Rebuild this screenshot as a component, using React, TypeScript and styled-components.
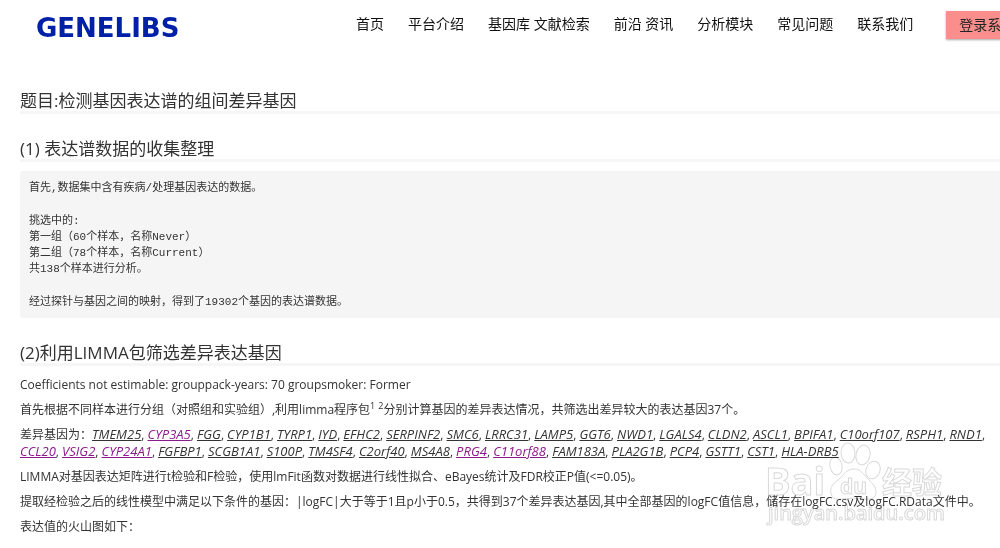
import React from "react";
import styled, { createGlobalStyle } from "styled-components";

const GlobalStyle = createGlobalStyle`
  body {
    margin: 0;
    background: #fff;
    color: #333;
    font: 12px/17px "Open Sans", "Noto Sans CJK SC", sans-serif;
  }
`;

const Page = styled.div`
  position: relative;
  overflow: hidden;
`;

const Header = styled.header`
  display: flex;
  align-items: flex-start;
  padding: 11px 0 0 36px;
  white-space: nowrap;
`;

const Logo = styled.a`
  flex: none;
  width: 320px;
  padding-top: 2px;
  color: #0020a8;
  font: bold 26px/30px "DejaVu Sans", sans-serif;
  text-decoration: none;
`;

const Nav = styled.nav`
  display: flex;
  flex: none;
  gap: 24px;
  padding-right: 33px;
`;

const NavLink = styled.a`
  color: #111;
  font-size: 14px;
  line-height: 26px;
  text-decoration: none;
`;

const LoginButton = styled.button`
  flex: none;
  height: 28px;
  padding: 0 13px;
  border: 0;
  background: #fa8e8c;
  box-shadow: 0 1px 2px rgba(0, 0, 0, 0.35);
  color: #222;
  font: 14px/28px "Open Sans", "Noto Sans CJK SC", sans-serif;
`;

const Article = styled.main`
  padding: 48px 0 12px 20px;
`;

const Heading = styled.h2`
  margin: 0 0 25px;
  border-bottom: 3px solid #f6f6f6;
  font-size: 17px;
  font-weight: 400;
  line-height: 20px;
`;

const SectionHeading = styled(Heading)`
  margin-bottom: 9px;
`;

const DataBlock = styled.div`
  display: flex;
  flex-direction: column;
  gap: 17px;
  margin-bottom: 25px;
  padding: 9px 9px 8px;
  border-radius: 3px 0 0 3px;
  background: #f5f5f5;
  font: 11px/16px "Liberation Mono", "Noto Sans CJK SC", monospace;
`;

const DataText = styled.p`
  margin: 0;
  white-space: pre-line;
`;

const Paragraph = styled.p`
  margin: 0 0 8px;
`;

const Results = styled.div`
  padding-top: 1px;
`;

const Sup = styled.sup`
  font-size: 9px;
  line-height: 0;
`;

const GeneLink = styled.a<{ $visited: boolean }>`
  color: ${(p) => (p.$visited ? "#8b1a8b" : "#333")};
  font-size: 13px;
  font-style: italic;
  text-decoration: underline;
`;

const Watermark = styled.div`
  position: absolute;
  top: 440px;
  left: 766px;
  width: 182px;
  opacity: 0.75;
  mix-blend-mode: multiply;
  pointer-events: none;
`;

const navItems = [
  "首页",
  "平台介绍",
  "基因库 文献检索",
  "前沿 资讯",
  "分析模块",
  "常见问题",
  "联系我们",
];

const genes =
  "TMEM25 CYP3A5 FGG CYP1B1 TYRP1 IYD EFHC2 SERPINF2 SMC6 LRRC31 LAMP5 GGT6 NWD1 LGALS4 CLDN2 ASCL1 BPIFA1 C10orf107 RSPH1 RND1 CCL20 VSIG2 CYP24A1 FGFBP1 SCGB1A1 S100P TM4SF4 C2orf40 MS4A8 PRG4 C11orf88 FAM183A PLA2G1B PCP4 GSTT1 CST1 HLA-DRB5".split(" ");

const visitedGenes = new Set(["CYP3A5", "CCL20", "VSIG2", "CYP24A1", "PRG4", "C11orf88"]);

const BaiduMark = () => (
  <Watermark>
    <svg width="182" height="90" viewBox="0 0 182 90" fill="#fff" stroke="#ccc" strokeWidth="1">
      <g fontFamily="Open Sans, Noto Sans CJK SC, sans-serif" fontWeight="700">
        <text x="-1" y="55" fontSize="38">Bai</text>
        <ellipse cx="70" cy="26" rx="6" ry="9" transform="rotate(-12 70 26)" />
        <ellipse cx="82" cy="13" rx="7" ry="10" transform="rotate(-4 82 13)" />
        <ellipse cx="97" cy="15" rx="7" ry="10" transform="rotate(12 97 15)" />
        <ellipse cx="107" cy="30" rx="7" ry="9" transform="rotate(20 107 30)" />
        <path d="M88 29c-8 0-10 6-16 11-6 4-8 8-7 13 1 6 6 7 11 6 8-1 15-1 23 0 6 1 11-1 11-7 0-5-3-8-7-12-6-6-8-11-15-11z" />
        <text x="74" y="54" fontSize="21">du</text>
        <text x="116" y="53" fontSize="30">经验</text>
        <text x="2" y="80" fontSize="20" fontWeight="600">jingyan.baidu.com</text>
      </g>
    </svg>
  </Watermark>
);

export default function App() {
  return (
    <>
      <GlobalStyle />
      <Page>
        <Header>
          <Logo href="#">GENELIBS</Logo>
          <Nav>
            {navItems.map((item) => (
              <NavLink href="#" key={item}>{item}</NavLink>
            ))}
          </Nav>
          <LoginButton type="button">登录系统</LoginButton>
        </Header>
        <Article>
          <Heading as="h1">题目:检测基因表达谱的组间差异基因</Heading>
          <SectionHeading>(1) 表达谱数据的收集整理</SectionHeading>
          <DataBlock>
            <DataText>首先,数据集中含有疾病/处理基因表达的数据。</DataText>
            <DataText>
              {"挑选中的:\n第一组（60个样本，名称Never）\n第二组（78个样本，名称Current）\n共138个样本进行分析。"}
            </DataText>
            <DataText>经过探针与基因之间的映射，得到了19302个基因的表达谱数据。</DataText>
          </DataBlock>
          <SectionHeading>(2)利用LIMMA包筛选差异表达基因</SectionHeading>
          <Results>
            <Paragraph>Coefficients not estimable: grouppack-years: 70 groupsmoker: Former</Paragraph>
            <Paragraph>
              首先根据不同样本进行分组（对照组和实验组）,利用limma程序包<Sup>1</Sup> <Sup>2</Sup>
              分别计算基因的差异表达情况，共筛选出差异较大的表达基因37个。
            </Paragraph>
            <Paragraph>
              差异基因为：
              {genes.map((gene, i) => (
                <React.Fragment key={gene}>
                  <GeneLink href="#" $visited={visitedGenes.has(gene)}>{gene}</GeneLink>
                  {i < genes.length - 1 ? ", " : ""}
                </React.Fragment>
              ))}
            </Paragraph>
            <Paragraph>
              LIMMA对基因表达矩阵进行t检验和F检验，使用lmFit函数对数据进行线性拟合、eBayes统计及FDR校正P值(&lt;=0.05)。
            </Paragraph>
            <Paragraph>
              提取经检验之后的线性模型中满足以下条件的基因：|logFC|大于等于1且p小于0.5，共得到37个差异表达基因,其中全部基因的logFC值信息，储存在logFC.csv及logFC.RData文件中。
            </Paragraph>
            <Paragraph>表达值的火山图如下：</Paragraph>
          </Results>
        </Article>
        <BaiduMark />
      </Page>
    </>
  );
}
